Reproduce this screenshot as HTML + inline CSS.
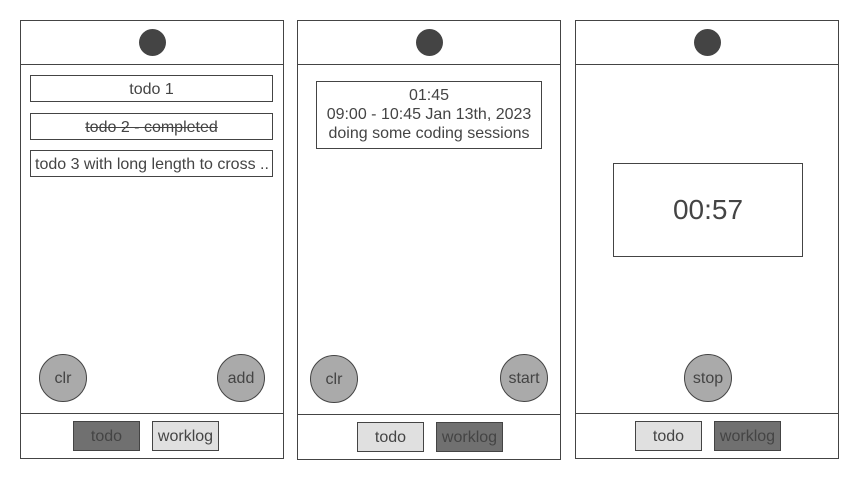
<!DOCTYPE html><html><head><style>
body{margin:0;width:861px;height:477px;background:#fff;position:relative;font-family:"Liberation Sans",sans-serif;color:#444;overflow:hidden}
div{position:absolute;box-sizing:border-box}
.p{border:1px solid #444;background:#fff}
.l{height:1px;background:#444}
.d{width:27px;height:27px;border-radius:50%;background:#444}
.b{border:1px solid #444;display:flex;align-items:center;justify-content:center;font-size:16px;white-space:nowrap;overflow:hidden;padding-top:2px}
.c{width:48px;height:48px;border-radius:50%;background:#aaa;border:1px solid #444;display:flex;align-items:center;justify-content:center;font-size:16px;padding-top:2px}
.dk{background:#707070}.lt{background:#e0e0e0}
</style></head><body>
<div class="p" style="left:20px;top:20px;width:264px;height:439px"></div>
<div class="l" style="left:20px;top:64px;width:264px"></div>
<div class="l" style="left:20px;top:413px;width:264px"></div>
<div class="d" style="left:139px;top:29px"></div>
<div class="b" style="left:30px;top:75px;width:243px;height:27px">todo 1</div>
<div class="b" style="left:30px;top:113px;width:243px;height:27px;text-decoration:line-through">todo 2 - completed</div>
<div class="b" style="left:30px;top:150px;width:243px;height:27px;justify-content:flex-start;padding-left:4px">todo 3 with long length to cross ..</div>
<div class="c" style="left:39px;top:354px">clr</div>
<div class="c" style="left:217px;top:354px">add</div>
<div class="b dk" style="left:73px;top:421px;width:67px;height:30px">todo</div>
<div class="b lt" style="left:152px;top:421px;width:67px;height:30px">worklog</div>

<div class="p" style="left:297px;top:20px;width:264px;height:440px"></div>
<div class="l" style="left:297px;top:64px;width:264px"></div>
<div class="l" style="left:297px;top:414px;width:264px"></div>
<div class="d" style="left:416px;top:29px"></div>
<div style="left:316px;top:81px;width:226px;height:68px;border:1px solid #444;text-align:center;font-size:16px;line-height:19px;padding-top:4px">01:45<br>09:00 - 10:45 Jan 13th, 2023<br>doing some coding sessions</div>
<div class="c" style="left:310px;top:355px">clr</div>
<div class="c" style="left:500px;top:354px">start</div>
<div class="b lt" style="left:357px;top:422px;width:67px;height:30px">todo</div>
<div class="b dk" style="left:436px;top:422px;width:67px;height:30px">worklog</div>

<div class="p" style="left:575px;top:20px;width:264px;height:439px"></div>
<div class="l" style="left:575px;top:64px;width:264px"></div>
<div class="l" style="left:575px;top:413px;width:264px"></div>
<div class="d" style="left:694px;top:29px"></div>
<div class="b" style="left:613px;top:163px;width:190px;height:94px;font-size:28px;padding-top:0">00:57</div>
<div class="c" style="left:684px;top:354px">stop</div>
<div class="b lt" style="left:635px;top:421px;width:67px;height:30px">todo</div>
<div class="b dk" style="left:714px;top:421px;width:67px;height:30px">worklog</div>
</body></html>
